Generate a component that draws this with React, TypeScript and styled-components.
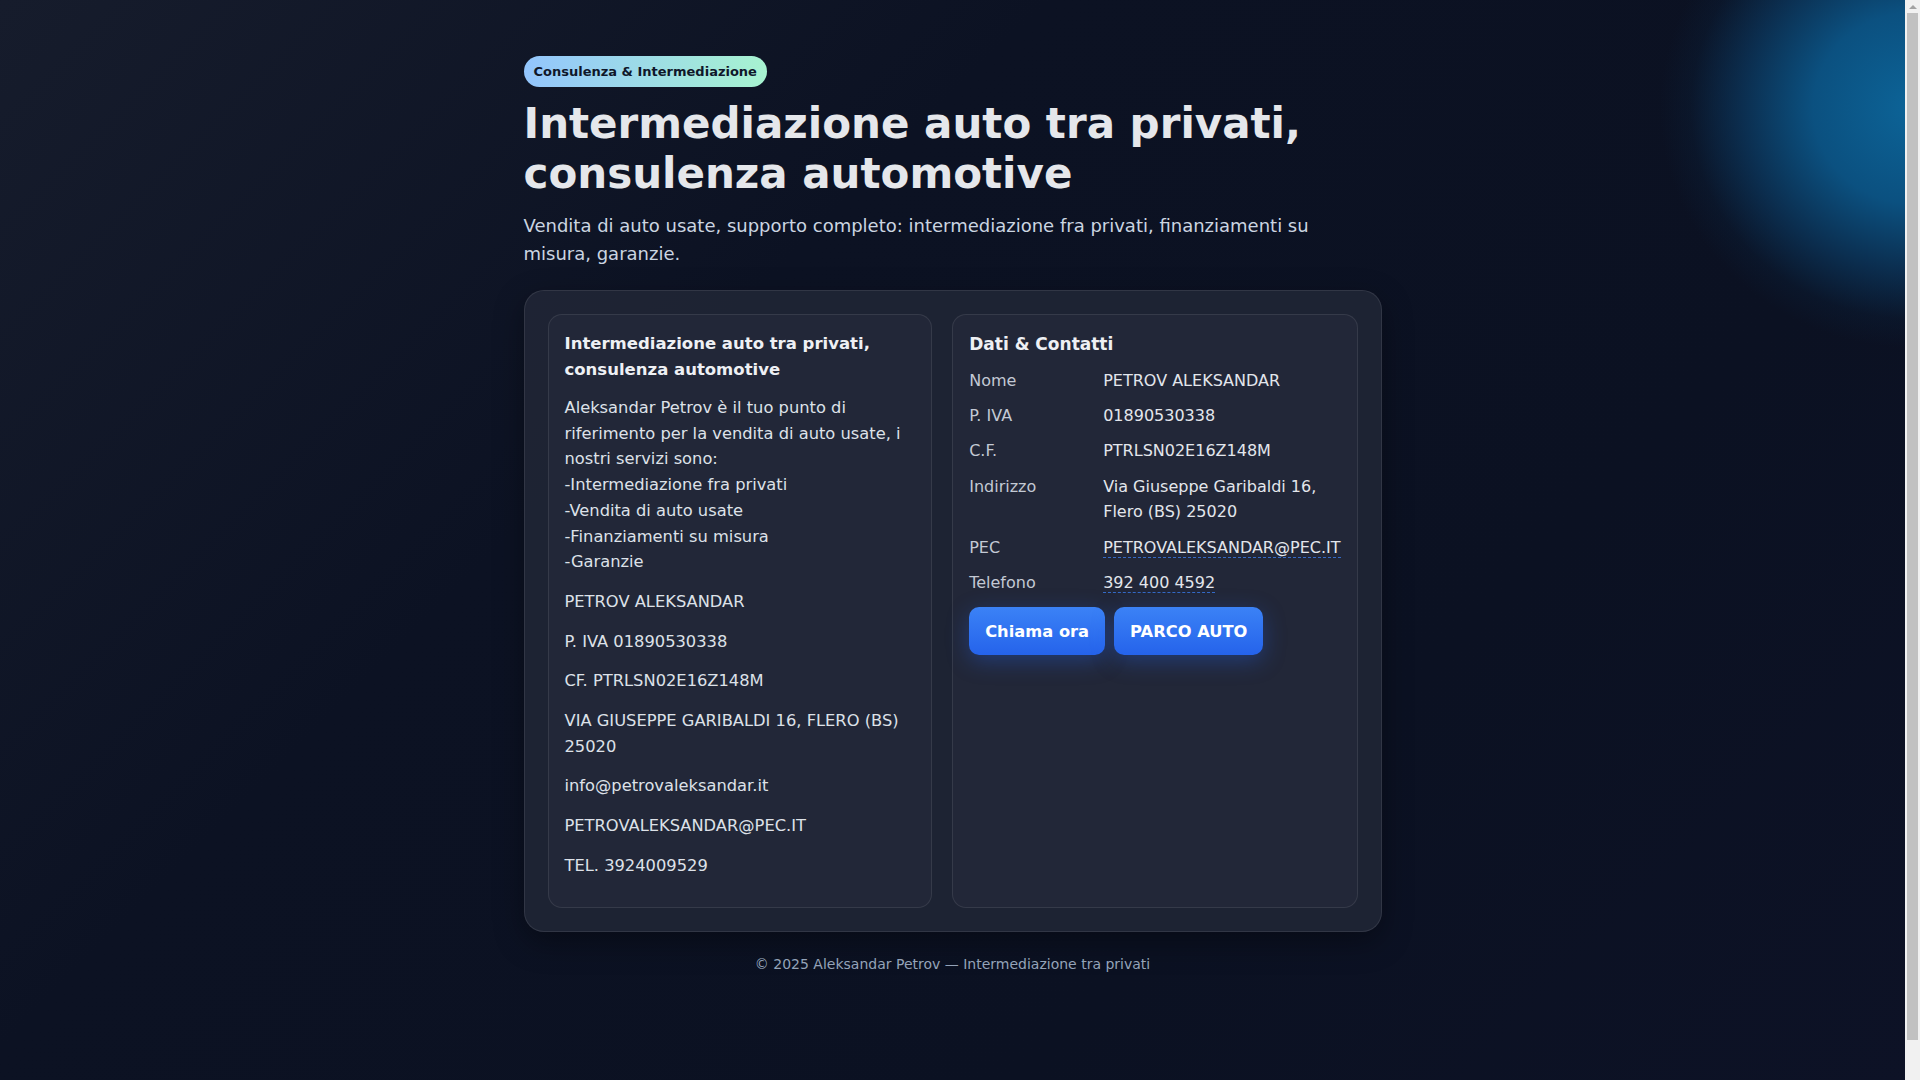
import React from "react";
import styled, { createGlobalStyle } from "styled-components";

const GlobalStyle = createGlobalStyle`
  html, body {
    margin: 0;
    padding: 0;
    background: #0b1120;
  }
  body {
    font-family: "DejaVu Sans", "Noto Sans", sans-serif;
    color: #e5e7eb;
    background:
      radial-gradient(ellipse 255px 240px at 1915px 108px, rgba(12, 100, 152, 1) 0%, rgba(11, 86, 136, 0.92) 40%, rgba(11, 58, 98, 0.7) 68%, rgba(10, 32, 58, 0.35) 88%, rgba(11, 17, 32, 0) 100%),
      linear-gradient(135deg, #161c2c 0%, #0c1223 35%, #0b1122 70%, #0d1226 100%);
    background-attachment: fixed;
  }
  * { box-sizing: border-box; }
`;

const Page = styled.div`
  min-height: 100vh;
  padding: 56px 15px 40px 0;
  box-sizing: content-box;
`;

const ScrollTrack = styled.div`
  position: fixed;
  top: 0;
  right: 0;
  bottom: 0;
  width: 15px;
  background: #f1f1f1;
  display: flex;
  flex-direction: column;
  align-items: center;
`;

const ScrollArrow = styled.div`
  width: 0;
  height: 0;
  margin: 5px 0 4px;
  border-left: 4px solid transparent;
  border-right: 4px solid transparent;
  border-bottom: 4px solid #a3a3a3;
`;

const ScrollThumb = styled.div`
  width: 11px;
  flex: 1;
  margin-bottom: 40px;
  background: #c1c1c1;
`;

const Main = styled.main`
  width: 858px;
  margin: 0 auto;
`;

const Badge = styled.span`
  display: inline-block;
  padding: 7px 10px;
  border-radius: 999px;
  background: linear-gradient(90deg, #93c5fd 0%, #a7f3d0 100%);
  color: #0f172a;
  font-size: 13px;
  font-weight: 700;
  line-height: 17px;
`;

const Title = styled.h1`
  margin: 12px 0 0;
  font-size: 42px;
  line-height: 50px;
  font-weight: 700;
  color: #e5e7eb;
`;

const Lead = styled.p`
  margin: 13px 0 0;
  font-size: 18px;
  line-height: 28px;
  color: #cbd5e1;
  max-width: 820px;
`;

const Panel = styled.section`
  margin-top: 22px;
  padding: 23px;
  border-radius: 20px;
  background: rgba(32, 37, 53, 0.92);
  border: 1px solid rgba(255, 255, 255, 0.09);
  box-shadow: 0 10px 30px rgba(0, 0, 0, 0.35);
  display: grid;
  grid-template-columns: 385fr 404fr;
  gap: 20px;
`;

const Card = styled.div`
  padding: 16px 16px 20px;
  border-radius: 14px;
  background: #222738;
  border: 1px solid rgba(255, 255, 255, 0.09);
  min-height: 594px;
`;

const CardTitle = styled.h3<{ $size?: number }>`
  margin: 0;
  font-size: ${(p) => p.$size ?? 16.5}px;
  line-height: 26px;
  font-weight: 700;
  color: #eef0f4;
`;

const Para = styled.p`
  margin: 12px 0 0;
  font-size: 16.3px;
  line-height: 25.7px;
  color: #dde1e8;
  & + & {
    margin-top: 14px;
  }
`;

const InfoGrid = styled.dl`
  margin: 11px 0 0;
  display: grid;
  grid-template-columns: 134px 1fr;
  row-gap: 9.5px;
  font-size: 16px;
  line-height: 25.7px;
`;

const Label = styled.dt`
  color: #c3c9d4;
`;

const Value = styled.dd`
  margin: 0;
  color: #e3e6ec;
`;

const DashLink = styled.a`
  color: #e3e6ec;
  text-decoration: none;
  border-bottom: 1px dashed rgba(59, 130, 246, 0.75);
`;

const Actions = styled.div`
  margin-top: 12px;
  display: flex;
  gap: 9px;
`;

const Button = styled.a`
  display: inline-flex;
  align-items: center;
  justify-content: center;
  height: 48px;
  padding: 0 16px;
  border-radius: 10px;
  background: linear-gradient(180deg, #3b82f6 0%, #2563eb 100%);
  color: #ffffff;
  font-size: 16.3px;
  font-weight: 700;
  text-decoration: none;
  box-shadow: 0 6px 22px rgba(37, 99, 235, 0.35);
`;

const Footer = styled.footer`
  margin-top: 22px;
  text-align: center;
  font-size: 14px;
  line-height: 20px;
  color: #94a3b8;
`;

export default function App() {
  return (
    <>
      <GlobalStyle />
      <Page>
        <Main>
          <Badge>Consulenza &amp; Intermediazione</Badge>
          <Title>
            Intermediazione auto tra privati,
            <br />
            consulenza automotive
          </Title>
          <Lead>
            Vendita di auto usate, supporto completo: intermediazione fra privati, finanziamenti su misura, garanzie.
          </Lead>
          <Panel>
            <Card>
              <CardTitle>Intermediazione auto tra privati, consulenza automotive</CardTitle>
              <Para>
                Aleksandar Petrov è il tuo punto di riferimento per la vendita di auto usate, i nostri servizi sono:
                <br />
                -Intermediazione fra privati
                <br />
                -Vendita di auto usate
                <br />
                -Finanziamenti su misura
                <br />
                -Garanzie
              </Para>
              <Para>PETROV ALEKSANDAR</Para>
              <Para>P. IVA 01890530338</Para>
              <Para>CF. PTRLSN02E16Z148M</Para>
              <Para>VIA GIUSEPPE GARIBALDI 16, FLERO (BS) 25020</Para>
              <Para>info@petrovaleksandar.it</Para>
              <Para>PETROVALEKSANDAR@PEC.IT</Para>
              <Para>TEL. 3924009529</Para>
            </Card>
            <Card>
              <CardTitle $size={17}>Dati &amp; Contatti</CardTitle>
              <InfoGrid>
                <Label>Nome</Label>
                <Value>PETROV ALEKSANDAR</Value>
                <Label>P. IVA</Label>
                <Value>01890530338</Value>
                <Label>C.F.</Label>
                <Value>PTRLSN02E16Z148M</Value>
                <Label>Indirizzo</Label>
                <Value>
                  Via Giuseppe Garibaldi 16,
                  <br />
                  Flero (BS) 25020
                </Value>
                <Label>PEC</Label>
                <Value>
                  <DashLink href="#">PETROVALEKSANDAR@PEC.IT</DashLink>
                </Value>
                <Label>Telefono</Label>
                <Value>
                  <DashLink href="#">392 400 4592</DashLink>
                </Value>
              </InfoGrid>
              <Actions>
                <Button href="#">Chiama ora</Button>
                <Button href="#">PARCO AUTO</Button>
              </Actions>
            </Card>
          </Panel>
          <Footer>© 2025 Aleksandar Petrov — Intermediazione tra privati</Footer>
        </Main>
      </Page>
      <ScrollTrack aria-hidden="true">
        <ScrollArrow />
        <ScrollThumb />
      </ScrollTrack>
    </>
  );
}
